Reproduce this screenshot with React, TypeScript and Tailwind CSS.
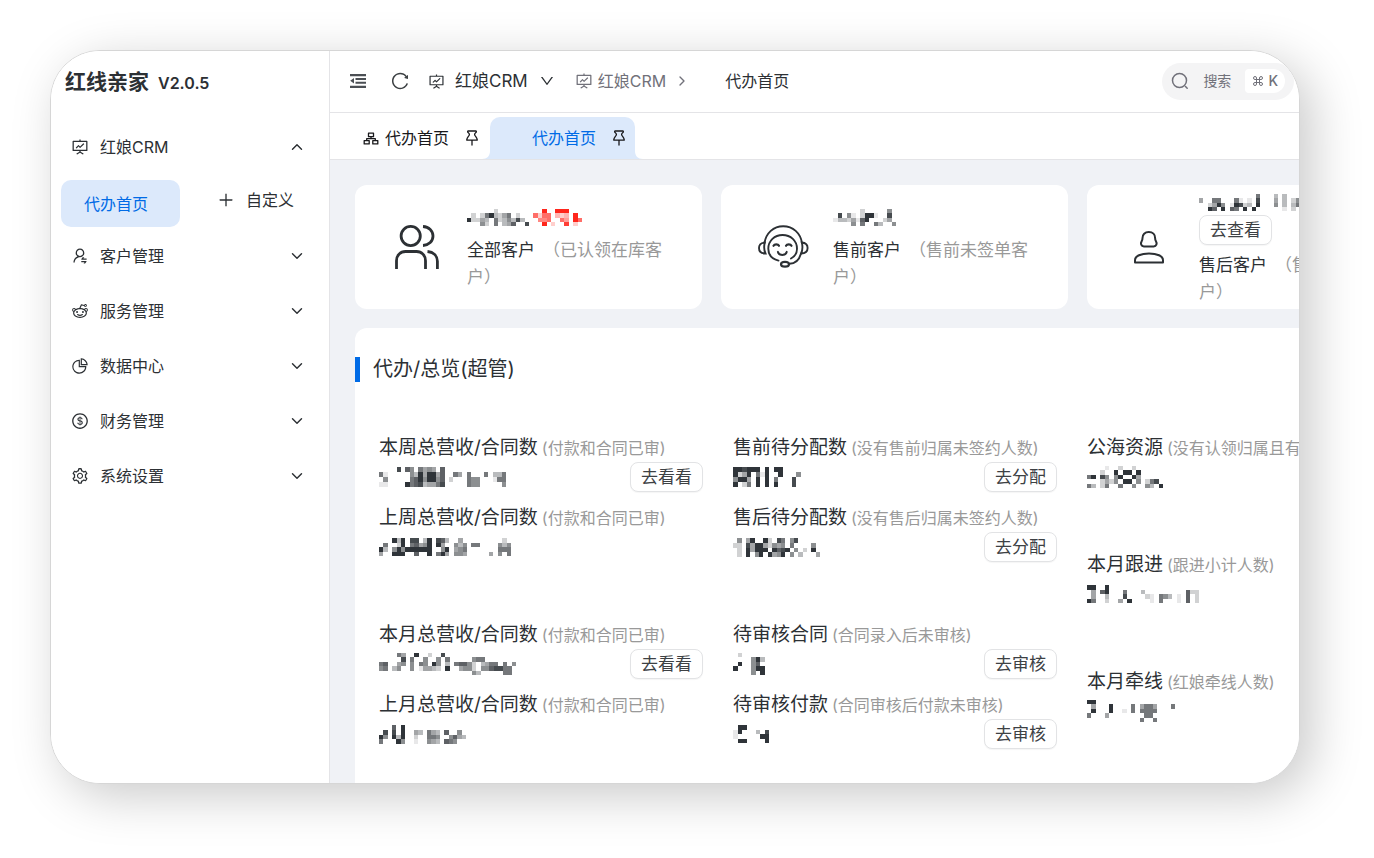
import { ReactNode } from "react";
import { ChevronDown, ChevronRight, ChevronUp, Command } from "lucide-react";
import {
  AiOutlineDollar,
  AiOutlineDown,
  AiOutlineFundProjectionScreen,
  AiOutlinePieChart,
  AiOutlinePlus,
  AiOutlineReddit,
  AiOutlineReload,
  AiOutlineSetting,
  AiOutlineUserSwitch,
} from "react-icons/ai";

/* Masked figures: digits are grey levels, letters a-i are red levels. */
type Mask = { w: number; h: number; rows: string[] };

const masks: Record<string, Mask> = {
  all: {
    w: 115,
    h: 17,
    rows: [
      "......2..........i..iii...",
      ".2.2693246.2...fbff.cbc.i.",
      "92243.6235383...eef..fd.if",
      "...52.6.347..8...i.b..h.b.",
    ],
  },
  presale: {
    w: 63,
    h: 17,
    rows: ["......2.....5.", ".8.51.2991..8.", "13324179...24.", "....5.6..63..5"],
  },
  aftersale: {
    w: 101,
    h: 17,
    rows: [
      ".............6...3.3...",
      "4..66...61.1.8...4.3.25",
      "..2495.19823.9...5.3.36",
      "..97.9.76.9.9......1.2.",
    ],
  },
  thisWeek: {
    w: 127,
    h: 20,
    rows: [
      "....8.75.6454.7..............",
      "61.....53949947..64.6...6.336",
      ".5.....67959957.2...655...166",
      "11....967834468.....655.....5",
    ],
  },
  lastWeek: {
    w: 132,
    h: 18,
    rows: [
      "...939.88.39.873..4.........2.",
      ".6..29.67459.94..535.66....535",
      "93.595999999..59.456.......666",
      "4..999..7..9.694.554.....4.5.6",
    ],
  },
  thisMonth: {
    w: 137,
    h: 22,
    rows: [
      "....64..9..2..8................",
      ".....8.6..5..5.6.....566.......",
      "67..45.5.65.95.3.67752.3466.6.5",
      "56.35..5.14432.9..4552.5578866.",
      ".....................53.....66.",
    ],
  },
  lastMonth: {
    w: 87,
    h: 19,
    rows: [
      "...7.9..............",
      ".8.8.9..43.643.7..5.",
      "95.939..2..665..5743",
      "6...95..1..543.765..",
    ],
  },
  preAssign: {
    w: 68,
    h: 20,
    rows: ["998999.9.99....", "9249.619..9...5", "5994.9.9.6...8.", "9.26.9.9.9...8."],
  },
  afterAssign: {
    w: 87,
    h: 19,
    rows: [
      ".5.49..92.86.58.....",
      "22.849942545.6....5.",
      ".2.94999.9789.5.2.9.",
      ".2.9.59.9459.5.3...4",
    ],
  },
  contracts: {
    w: 32,
    h: 22,
    rows: [".2.....", "....593", ".9..57.", "9...599", "....5.9"],
  },
  payments: {
    w: 36,
    h: 18,
    rows: [".99.....", "19...3.8", "1.....99", ".99....9"],
  },
  pool: {
    w: 76,
    h: 22,
    rows: [
      "....1..2..2......",
      "...2..9.99.9.....",
      "69.85.59..94.....",
      "...2425.99.5.268.",
      "63.26..6..5..53.9",
    ],
  },
  follow: {
    w: 112,
    h: 18,
    rows: [
      "99..9....................",
      ".4.79...6...3.........722",
      ".4..3...8....21.653.1.7.2",
      "96..2..4.9....1.6...1.7.2",
    ],
  },
  match: {
    w: 88,
    h: 22,
    rows: [
      "99..................",
      ".4...9....6.4664...6",
      ".9...9..1.6.6666....",
      "6...4........66.....",
      "............6..6....",
    ],
  },
};

function Mosaic({ name }: { name: string }) {
  const { w, h, rows } = masks[name];
  return (
    <svg
      width={w}
      height={h}
      viewBox={`0 0 ${rows[0].length} ${rows.length}`}
      preserveAspectRatio="none"
      shapeRendering="crispEdges"
      aria-hidden="true"
      className="shrink-0"
    >
      {rows.flatMap((row, y) =>
        row.split("").map((c, x) => {
          if (c === ".") return null;
          const red = c >= "a";
          const level = red ? c.charCodeAt(0) - 96 : Number(c);
          return (
            <rect
              key={`${x}-${y}`}
              x={x}
              y={y}
              width="1"
              height="1"
              fill={red ? "#ff1a10" : "#24292e"}
              fillOpacity={level / 9.5}
            />
          );
        })
      )}
    </svg>
  );
}

function FoldIcon() {
  return (
    <svg width="16" height="14" viewBox="0 0 16 14" fill="currentColor" aria-hidden="true">
      <path d="M0 0h16v2.300H0zM5.500 4H16v2H5.500zM5.500 7.700H16v2H5.500zM0 11.700h16V14H0zM4 4v5.600L.2 6.800z" />
    </svg>
  );
}

function SearchIcon() {
  return (
    <svg width="18" height="18" viewBox="0 0 18 18" fill="none" stroke="currentColor" strokeWidth="1.500" strokeLinecap="round" aria-hidden="true">
      <circle cx="8.500" cy="8.500" r="7" />
      <path d="m14.500 14.500 1.700 1.700" />
    </svg>
  );
}

function PinIcon() {
  return (
    <svg width="12" height="16" viewBox="0 0 12 16" fill="none" stroke="currentColor" strokeWidth="1.300" strokeLinejoin="round" strokeLinecap="round" aria-hidden="true">
      <path d="M2.300 1h7.400c.8 0 .9 1 .3 1.500-.8.600-1.400 1-1.400 1.900 0 1.700 2.500 2.600 2.700 5.700H.7c.2-3.100 2.700-4 2.700-5.700 0-.9-.600-1.300-1.400-1.900C1.400 2 1.500 1 2.300 1ZM6 10.100v4.900" />
    </svg>
  );
}

function TreeIcon() {
  return (
    <svg width="16" height="13" viewBox="0 0 16 13" fill="none" stroke="currentColor" strokeWidth="1.300" strokeLinejoin="round" aria-hidden="true">
      <path d="M5.500 1.100h5v3.600h-5zM1.200 8.600h5v3.300h-5zM9.800 8.600h5v3.300h-5zM8 4.700v2M3.700 8.600V6.700h8.600v1.900" />
    </svg>
  );
}

function UsersIcon() {
  return (
    <svg width="44" height="44" viewBox="0 0 44 44" fill="none" stroke="currentColor" strokeWidth="2.800" aria-hidden="true">
      <circle cx="15.700" cy="11" r="9.600" />
      <path d="M28 1.500c6 .3 10 4.400 10 9.500s-4 9.200-10 9.500" />
      <path d="M1.500 44v-8.200c0-5.400 3.800-9.300 9-9.300h11c5.200 0 9 3.900 9 9.300V44" />
      <path d="M32.500 26.500c5.800.6 9.900 4.400 9.900 9.800V44" />
    </svg>
  );
}

function AgentIcon() {
  return (
    <svg width="51" height="44" viewBox="0 0 51 44" fill="none" stroke="currentColor" strokeWidth="1.900" strokeLinecap="round" aria-hidden="true">
      <path d="M6.500 18C8 8 15.500 1.200 25.200 1.200S42.500 8 44 18" />
      <path d="M20.500 35.600C14.500 34 10.300 29.900 10.300 23.700c0-7.800 6.200-13.700 14.300-13.700S39 15.900 39 23.700c0 4.300-2.300 7.900-6 9.800" />
      <path d="M6.800 17.500C3 17.800 1 20 1 23c0 3.200 2.200 5.400 6.500 5.500-1.600-3.500-1.600-7.500-.7-11ZM43.800 17.500c3.800.3 5.800 2.500 5.800 5.500 0 3.200-2.200 5.400-6.500 5.500 1.600-3.500 1.600-7.500.7-11Z" />
      <path d="M43 28.500c-1.700 6.300-5.500 10-11.500 10.300" />
      <ellipse cx="27" cy="39.300" rx="4" ry="2.400" strokeWidth="2.200" />
      <path d="M15.500 20.800c1-2 4.500-2 5.500 0M28 20.800c1-2 4.500-2 5.500 0" strokeWidth="2.200" />
      <path d="M19.800 26.800c1 4.200 8 4.200 9 0" />
    </svg>
  );
}

function PersonIcon() {
  return (
    <svg width="30" height="33" viewBox="0 0 30 33" fill="none" stroke="currentColor" strokeWidth="2" strokeLinejoin="round" aria-hidden="true">
      <path d="M14.800 1c4 0 6.300 2.700 6.300 6 0 1.500.2 2.400.9 3.400 1.300 2 .5 5.100-2.300 5.100H9.900c-2.800 0-3.600-3.100-2.300-5.100.7-1 .9-1.900.9-3.400 0-3.300 2.300-6 6.300-6Z" />
      <path d="M1 31.600v-2.400C1 25 7 22.400 15 22.400s14 2.600 14 6.800v2.400z" />
    </svg>
  );
}

function OutlineButton({ children }: { children: ReactNode }) {
  return (
    <button
      type="button"
      className="h-[30px] shrink-0 rounded-lg border border-[#e2e3e5] bg-white px-[10px] text-[17px] leading-[28px] text-[#3d4144] shadow-[0_1px_1px_rgba(0,0,0,0.04)]"
    >
      {children}
    </button>
  );
}

function MenuRow({ icon, label, open = false }: { icon: ReactNode; label: string; open?: boolean }) {
  return (
    <button type="button" aria-expanded={open} className="flex h-[55px] w-full items-center pr-[23px] pl-5 text-left">
      <span className="text-[18px]">{icon}</span>
      <span className="ml-[11px] flex-1 text-[16px] leading-6">{label}</span>
      {open ? <ChevronUp size={18} strokeWidth={1.9} /> : <ChevronDown size={18} strokeWidth={1.9} />}
    </button>
  );
}

function Sidebar() {
  return (
    <aside className="flex w-[279px] shrink-0 flex-col border-r border-[#e4e4e7] bg-white">
      <div className="mb-1.5 flex h-[62px] items-center gap-[9px] pl-[14px]">
        <span className="text-[21px] leading-[30px] font-bold">红线亲家</span>
        <span className="pt-0.5 text-[16px] leading-6 font-semibold">V2.0.5</span>
      </div>
      <nav>
        <MenuRow icon={<AiOutlineFundProjectionScreen />} label="红娘CRM" open />
        <div className="flex h-[54px] items-start pt-1.5 pl-[10px]">
          <a href="#home" className="flex h-[47px] w-[119px] items-center rounded-[10px] bg-[#dce9fb] pl-[23px] text-[16px] leading-6 text-[#006be6]">
            代办首页
          </a>
          <button type="button" className="ml-[37px] flex h-10 items-center gap-[11px] text-[16px] leading-6">
            <AiOutlinePlus size={18} />
            自定义
          </button>
        </div>
        <MenuRow icon={<AiOutlineUserSwitch />} label="客户管理" />
        <MenuRow icon={<AiOutlineReddit />} label="服务管理" />
        <MenuRow icon={<AiOutlinePieChart />} label="数据中心" />
        <MenuRow icon={<AiOutlineDollar />} label="财务管理" />
        <MenuRow icon={<AiOutlineSetting />} label="系统设置" />
      </nav>
    </aside>
  );
}

function Header() {
  return (
    <header className="flex h-[62px] shrink-0 items-center border-b border-[#e4e4e7] bg-white pr-[5px] pb-px pl-5">
      <button type="button" aria-label="折叠菜单" className="text-[#4b4f54]">
        <FoldIcon />
      </button>
      <button type="button" aria-label="刷新" className="ml-6 text-[20px] text-[#3d4144]">
        <AiOutlineReload />
      </button>
      <button type="button" className="ml-[18px] flex items-center text-[17px] leading-6">
        <AiOutlineFundProjectionScreen size={17} />
        <span className="mr-[11px] ml-[10px]">红娘CRM</span>
        <AiOutlineDown size={16} />
      </button>
      <nav aria-label="面包屑" className="ml-5 flex items-center text-[16px] leading-6">
        <a href="#crm" className="flex items-center gap-[5px] text-[#71717a]">
          <AiOutlineFundProjectionScreen size={18} />
          红娘CRM
        </a>
        <ChevronRight size={16} className="mr-[35px] ml-2 text-[#71717a]" />
        <span>代办首页</span>
      </nav>
      <button type="button" className="ml-auto flex h-[37px] items-center rounded-full bg-[#f4f4f5] pr-[9px] pl-[9px] text-[14px] leading-5 text-[#71717a]">
        <SearchIcon />
        <span className="mr-[14px] ml-[14px]">搜索</span>
        <kbd className="flex h-6 items-center gap-1 rounded-l-sm rounded-r-xl bg-white px-[7px] font-sans text-[14px]">
          <Command size={12} />
          <span className="font-['Inter','Noto_Sans_CJK_SC',sans-serif] font-medium">K</span>
        </kbd>
      </button>
    </header>
  );
}

function Tabs() {
  return (
    <div role="tablist" className="flex h-[47px] shrink-0 items-end border-b border-[#e4e4e7] bg-white pl-[33px] text-[16px] leading-6">
      <button type="button" role="tab" aria-selected="false" className="flex h-[42px] items-center pr-3 text-[#18181b]">
        <TreeIcon />
        <span className="mr-[17px] ml-[6px]">代办首页</span>
        <PinIcon />
      </button>
      <button type="button" role="tab" aria-selected="true" className="relative flex h-[42px] items-center rounded-t-[10px] bg-[#dce9fb] pr-[10px] pl-[42px] text-[#006be6]">
        <svg width="8" height="8" viewBox="0 0 8 8" className="absolute bottom-0 -left-2" aria-hidden="true">
          <path d="M8 0v8H0c5 0 8-3 8-8Z" fill="#dce9fb" />
        </svg>
        <span className="mr-[17px]">代办首页</span>
        <span className="text-[#18181b]">
          <PinIcon />
        </span>
        <svg width="8" height="8" viewBox="0 0 8 8" className="absolute -right-2 bottom-0" aria-hidden="true">
          <path d="M0 0v8h8C3 8 0 5 0 0Z" fill="#dce9fb" />
        </svg>
      </button>
    </div>
  );
}

function SummaryCard({ icon, mask, title, note, action }: { icon: ReactNode; mask: string; title: string; note: string; action?: string }) {
  return (
    <article className="flex h-[124px] w-[347px] shrink-0 items-center rounded-xl bg-white pr-7 pl-3">
      <div className="flex w-[100px] shrink-0 justify-center">{icon}</div>
      <div className="pt-px">
        <div className="flex h-[26px] items-center">
          <Mosaic name={mask} />
        </div>
        {action && (
          <div className="flex">
            <OutlineButton>{action}</OutlineButton>
          </div>
        )}
        <p className="mt-[7px] text-[17px] leading-[27px]">
          <span className="mr-2">{title}</span>
          <span className="text-[#999]">{note}</span>
        </p>
      </div>
    </article>
  );
}

function Stat({ title, note, mask, action }: { title: string; note: string; mask: string; action?: string }) {
  return (
    <div>
      <h3 className="flex h-[30px] items-center gap-1 pt-0.5 whitespace-nowrap">
        <span className="text-[19px] leading-[28px]">{title}</span>
        <small className="text-[16px] leading-[28px] text-[#999]">{note}</small>
      </h3>
      <div className="flex h-[30px] items-center justify-between">
        <Mosaic name={mask} />
        {action && <OutlineButton>{action}</OutlineButton>}
      </div>
    </div>
  );
}

function Overview() {
  return (
    <section className="mt-[19px] min-w-[1100px] flex-1 rounded-t-xl bg-white pt-7 pb-7">
      <h2 className="flex items-center text-[20px] leading-[26px]">
        <span className="mr-[13px] h-[25px] w-[5px] bg-[#006be6]" />
        代办/总览(超管)
      </h2>
      <div className="mt-[50px] flex gap-[30px] pl-6">
        <div className="flex w-[324px] shrink-0 flex-col gap-[57px]">
          <div className="flex flex-col gap-[10px]">
            <Stat title="本周总营收/合同数" note="(付款和合同已审)" mask="thisWeek" action="去看看" />
            <Stat title="上周总营收/合同数" note="(付款和合同已审)" mask="lastWeek" />
          </div>
          <div className="flex flex-col gap-[10px]">
            <Stat title="本月总营收/合同数" note="(付款和合同已审)" mask="thisMonth" action="去看看" />
            <Stat title="上月总营收/合同数" note="(付款和合同已审)" mask="lastMonth" />
          </div>
        </div>
        <div className="flex w-[324px] shrink-0 flex-col gap-[57px]">
          <div className="flex flex-col gap-[10px]">
            <Stat title="售前待分配数" note="(没有售前归属未签约人数)" mask="preAssign" action="去分配" />
            <Stat title="售后待分配数" note="(没有售后归属未签约人数)" mask="afterAssign" action="去分配" />
          </div>
          <div className="flex flex-col gap-[10px]">
            <Stat title="待审核合同" note="(合同录入后未审核)" mask="contracts" action="去审核" />
            <Stat title="待审核付款" note="(合同审核后付款未审核)" mask="payments" action="去审核" />
          </div>
        </div>
        <div className="flex w-[324px] shrink-0 flex-col gap-[57px]">
          <Stat title="公海资源" note="(没有认领归属且有效)" mask="pool" />
          <Stat title="本月跟进" note="(跟进小计人数)" mask="follow" />
          <Stat title="本月牵线" note="(红娘牵线人数)" mask="match" />
        </div>
      </div>
    </section>
  );
}

export default function App() {
  return (
    <div className="flex min-h-screen bg-white pt-[50px] pr-[74px] pb-[74px] pl-[50px] font-['Inter','Noto_Sans_CJK_SC',sans-serif] text-[#2c3034]">
      <div className="flex min-w-0 flex-1 overflow-hidden rounded-[50px] border border-[#d6d6d6] bg-white shadow-[12px_12px_50px_rgba(0,0,0,0.21)]">
        <Sidebar />
        <div className="flex min-w-0 flex-1 flex-col">
          <Header />
          <Tabs />
          <main className="flex flex-1 flex-col overflow-hidden bg-[#f0f2f6] pt-[25px] pl-[25px]">
            <div className="flex gap-[19px]">
              <SummaryCard icon={<UsersIcon />} mask="all" title="全部客户" note="（已认领在库客户）" />
              <SummaryCard icon={<AgentIcon />} mask="presale" title="售前客户" note="（售前未签单客户）" />
              <SummaryCard icon={<PersonIcon />} mask="aftersale" title="售后客户" note="（售后已签单客户）" action="去查看" />
            </div>
            <Overview />
          </main>
        </div>
      </div>
    </div>
  );
}
